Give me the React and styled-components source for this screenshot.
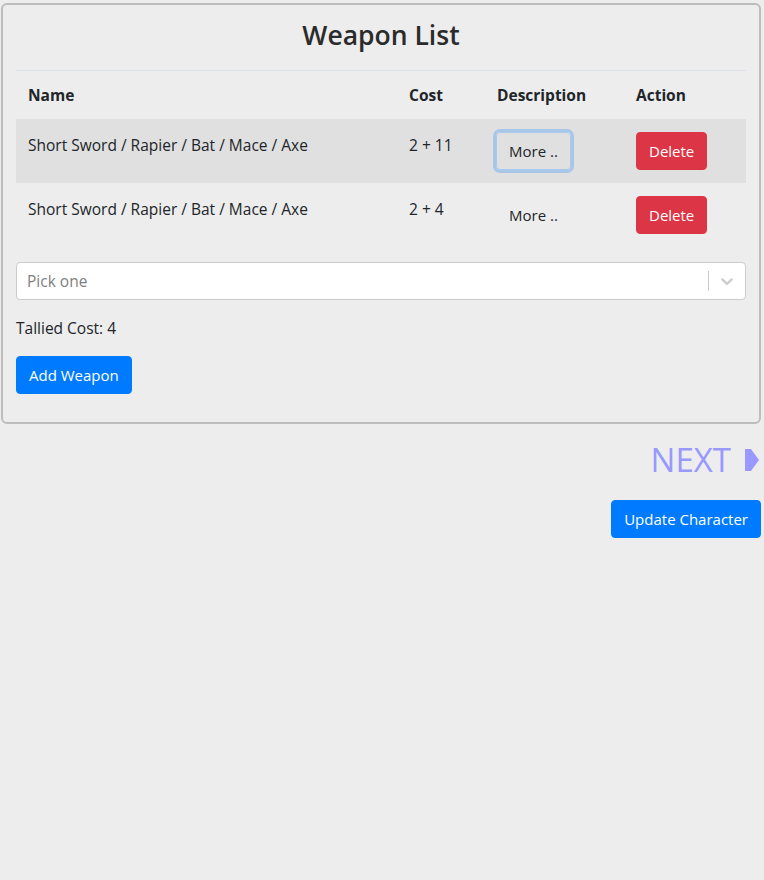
import React from "react";
import styled, { createGlobalStyle } from "styled-components";

const Global = createGlobalStyle`
  html, body { margin: 0; padding: 0; background: #ededed; }
  body {
    font-family: "Open Sans", "Noto Sans", sans-serif;
    font-size: 15.5px;
    line-height: 24px;
    color: #212529;
  }
  * { box-sizing: border-box; }
`;

const Page = styled.div`
  padding: 3px 3px 0 1px;
  display: flex;
  flex-direction: column;
`;

const Card = styled.section`
  border: 2px solid #bdbdbd;
  border-radius: 6px;
  padding: 13px 13px 28px;
  display: flex;
  flex-direction: column;
`;

const Title = styled.h3`
  margin: 0 0 18px;
  line-height: 34px;
  text-align: center;
  font-size: 26.5px;
  font-weight: 600;
  color: #2b2b2b;
`;

const Table = styled.table`
  width: 100%;
  border-collapse: collapse;
  table-layout: fixed;
  border-top: 1px solid #dde2e8;
`;

const Th = styled.th`
  text-align: left;
  font-weight: 700;
  padding: 12px;
  height: 48px;
  width: ${(p) => p.$w || "auto"};
`;

const Row = styled.tr`
  background: ${(p) => (p.$shade ? "#e0e0e0" : "transparent")};
`;

const Td = styled.td`
  padding: ${(p) => (p.$control ? "13px 12px 13px" : "14px 12px 12px")};
  vertical-align: top;
  height: 64px;
`;

const LinkButton = styled.button`
  font: inherit;
  font-size: 15px;
  color: #212529;
  background: transparent;
  border: 1px solid transparent;
  border-radius: 4px;
  padding: 6px 12px;
  margin: 0 0 0 -1px;
  line-height: 24px;
  cursor: pointer;
  box-shadow: ${(p) => (p.$focus ? "0 0 0 3px rgba(0, 123, 255, 0.25)" : "none")};
  ${(p) => p.$focus && "border-color: #a9c9ee;"}
`;

const Btn = styled.button`
  font: inherit;
  font-size: 15px;
  color: #fff;
  background: ${(p) => p.$bg};
  border: 1px solid ${(p) => p.$bg};
  border-radius: 4px;
  padding: 6px 12px;
  line-height: 24px;
  cursor: pointer;
`;

const SelectBox = styled.div`
  margin-top: 15px;
  height: 38px;
  background: #fff;
  border: 1px solid #cccccc;
  border-radius: 4px;
  display: flex;
  align-items: center;
`;

const Placeholder = styled.div`
  flex: 1;
  padding-left: 10px;
  color: #808080;
`;

const Separator = styled.span`
  width: 1px;
  align-self: stretch;
  margin: 8px 0;
  background: #cccccc;
`;

const Indicator = styled.div`
  width: 36px;
  display: flex;
  align-items: center;
  justify-content: center;
  color: #cccccc;
`;

const Tally = styled.p`
  margin: 16px 0 16px;
`;

const BtnRow = styled.div`
  display: flex;
`;

const Footer = styled.div`
  display: flex;
  flex-direction: column;
  align-items: flex-end;
  gap: 20px;
  padding-top: 16px;
`;

const Next = styled.a`
  display: flex;
  align-items: center;
  gap: 14px;
  font-size: 33px;
  line-height: 40px;
  color: #9999ff;
  text-decoration: none;
  padding-right: 2px;
`;

const rows = [
  { name: "Short Sword / Rapier / Bat / Mace / Axe", cost: "2 + 11", shade: true, focus: true },
  { name: "Short Sword / Rapier / Bat / Mace / Axe", cost: "2 + 4" },
];

export default function App() {
  return (
    <>
      <Global />
      <Page>
        <Card>
          <Title>Weapon List</Title>
          <Table>
            <thead>
              <tr>
                <Th>Name</Th>
                <Th $w="88px">Cost</Th>
                <Th $w="139px">Description</Th>
                <Th $w="122px">Action</Th>
              </tr>
            </thead>
            <tbody>
              {rows.map((r, i) => (
                <Row key={i} $shade={r.shade}>
                  <Td>{r.name}</Td>
                  <Td>{r.cost}</Td>
                  <Td $control>
                    <LinkButton $focus={r.focus}>More ..</LinkButton>
                  </Td>
                  <Td $control>
                    <Btn $bg="#dc3545">Delete</Btn>
                  </Td>
                </Row>
              ))}
            </tbody>
          </Table>
          <SelectBox>
            <Placeholder>Pick one</Placeholder>
            <Separator />
            <Indicator>
              <svg width="20" height="20" viewBox="0 0 20 20" fill="currentColor">
                <path d="M4.516 7.548c0.436-0.446 1.043-0.481 1.576 0l3.908 3.747 3.908-3.747c0.533-0.481 1.141-0.446 1.574 0 0.436 0.445 0.408 1.197 0 1.615-0.406 0.418-4.695 4.502-4.695 4.502-0.217 0.223-0.502 0.335-0.787 0.335s-0.57-0.112-0.789-0.335c0 0-4.287-4.084-4.695-4.502s-0.436-1.170 0-1.615z" />
              </svg>
            </Indicator>
          </SelectBox>
          <Tally>Tallied Cost: 4</Tally>
          <BtnRow>
            <Btn $bg="#007bff">Add Weapon</Btn>
          </BtnRow>
        </Card>
        <Footer>
          <Next href="#">
            NEXT
            <svg width="14" height="22" viewBox="0 0 14 22" fill="currentColor">
              <path d="M0 0 H6 L14 11 L6 22 H0 Z" />
            </svg>
          </Next>
          <Btn $bg="#007bff">Update Character</Btn>
        </Footer>
      </Page>
    </>
  );
}
